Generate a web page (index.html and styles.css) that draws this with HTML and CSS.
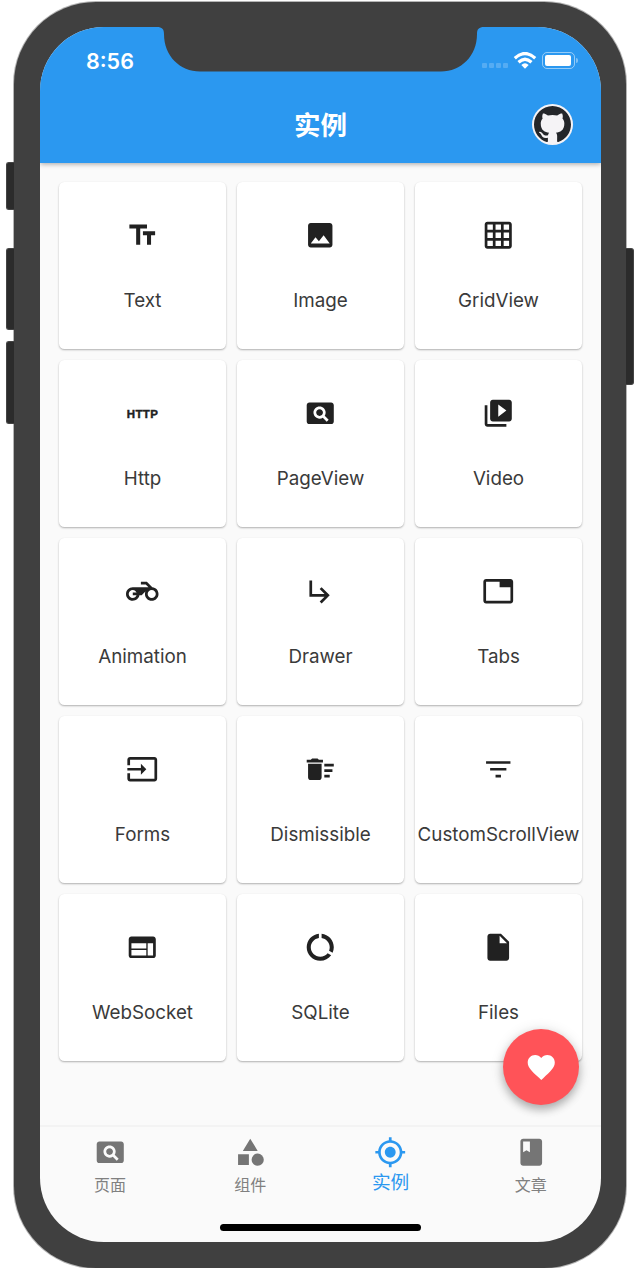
FILE: index.html
```html
<!DOCTYPE html>
<html lang="zh-CN">
<head>
<meta charset="utf-8">
<title>实例</title>
<link rel="stylesheet" href="styles.css">
</head>
<body>
<div class="phone">
  <span class="side-button mute"></span>
  <span class="side-button volume-up"></span>
  <span class="side-button volume-down"></span>
  <span class="side-button power"></span>
  <div class="screen">
    <svg class="notch" viewBox="0 0 328 45"><path d="M0 0C5 0 7 2 7 7C7 29 23 44.500 43 44.500H284C304 44.500 320 29 320 7C320 2 322 0 327 0Z"/></svg>
    <header class="app-bar">
      <div class="status">
        <span class="time">8:56</span>
        <div class="indicators">
          <span class="signal"><i></i><i></i><i></i><i></i></span>
          <svg class="wifi" viewBox="0 0 24 18"><path d="M1.800 6.200Q12-3.200 22.200 6.200M5.500 10.200Q12 4.200 18.500 10.200" fill="none" stroke="#fff" stroke-width="3.200"/><path d="M8.300 13Q12 9.700 15.700 13L12 16.800Z"/></svg>
          <span class="battery"><i></i></span>
          <span class="battery-tip"></span>
        </div>
      </div>
      <div class="title-row">
        <h1>实例</h1>
        <div class="avatar"><svg viewBox="0 0 16 16"><path d="M8 0C3.580 0 0 3.580 0 8c0 3.540 2.290 6.530 5.470 7.590.4.070.55-.17.55-.38 0-.19-.01-.82-.01-1.490-2.010.37-2.530-.49-2.690-.94-.09-.23-.48-.94-.82-1.130-.28-.15-.68-.52-.01-.53.63-.01 1.080.58 1.230.82.72 1.210 1.870.87 2.330.66.07-.52.28-.87.51-1.070-1.780-.2-3.640-.89-3.640-3.950 0-.87.31-1.590.82-2.150-.08-.2-.36-1.020.08-2.120 0 0 .67-.21 2.200.82.64-.18 1.320-.27 2-.27s1.360.09 2 .27c1.530-1.040 2.200-.82 2.200-.82.44 1.100.16 1.920.08 2.120.51.56.82 1.270.82 2.150 0 3.070-1.870 3.750-3.650 3.950.29.25.54.73.54 1.480 0 1.070-.01 1.930-.01 2.200 0 .21.15.46.55.38A8.013 8.013 0 0 0 16 8c0-4.420-3.580-8-8-8z"/></svg></div>
      </div>
    </header>
    <main class="grid">
      <div class="card"><svg class="icon" viewBox="0 0 24 24"><path d="M2.500 5.500h13M9 5.500V19M12.500 10.500h9M17 10.500V19" fill="none" stroke="currentColor" stroke-width="3"/></svg><span>Text</span></div>
      <div class="card"><svg class="icon" viewBox="0 0 24 24"><path d="M21 19V5c0-1.100-.9-2-2-2H5c-1.100 0-2 .9-2 2v14c0 1.100.9 2 2 2h14c1.100 0 2-.9 2-2zM8.500 13.500l2.500 3.010L14.500 12l4.500 6H5l3.500-4.500z"/></svg><span>Image</span></div>
      <div class="card"><svg class="icon" viewBox="0 0 24 24"><path d="M20 2H4c-1.100 0-2 .9-2 2v16c0 1.100.9 2 2 2h16c1.100 0 2-.9 2-2V4c0-1.100-.9-2-2-2zM8 20H4v-4h4v4zm0-6H4v-4h4v4zm0-6H4V4h4v4zm6 12h-4v-4h4v4zm0-6h-4v-4h4v4zm0-6h-4V4h4v4zm6 12h-4v-4h4v4zm0-6h-4v-4h4v4zm0-6h-4V4h4v4z"/></svg><span>GridView</span></div>
      <div class="card"><b class="icon http">HTTP</b><span>Http</span></div>
      <div class="card"><svg class="icon" viewBox="0 0 24 24"><path d="M11.500 9C10.120 9 9 10.120 9 11.500s1.120 2.500 2.500 2.500 2.500-1.120 2.500-2.500S12.880 9 11.500 9zM20 4H4c-1.100 0-2 .9-2 2v12c0 1.100.9 2 2 2h16c1.100 0 2-.9 2-2V6c0-1.100-.9-2-2-2zm-3.210 14.210l-2.910-2.910c-.69.44-1.510.7-2.390.7C9.010 16 7 13.990 7 11.500S9.010 7 11.500 7 16 9.010 16 11.500c0 .88-.26 1.690-.7 2.390l2.910 2.900-1.420 1.420z"/></svg><span>PageView</span></div>
      <div class="card"><svg class="icon" viewBox="0 0 24 24"><path d="M4 6H2v14c0 1.100.9 2 2 2h14v-2H4V6zm16-4H8c-1.100 0-2 .9-2 2v12c0 1.100.9 2 2 2h12c1.100 0 2-.9 2-2V4c0-1.100-.9-2-2-2zm-8 12.500v-9l6 4.500-6 4.500z"/></svg><span>Video</span></div>
      <div class="card"><svg class="icon" viewBox="0 0 24 24"><path d="M19.440 9.030L15.410 5H11v2h3.590l2 2H5c-2.800 0-5 2.200-5 5s2.200 5 5 5c2.460 0 4.450-1.690 4.900-4h1.650l2.770-2.770c-.21.54-.32 1.140-.32 1.770 0 2.800 2.200 5 5 5s5-2.200 5-5c0-2.650-1.970-4.770-4.560-4.970zM7.820 15C7.400 16.150 6.280 17 5 17c-1.630 0-3-1.370-3-3s1.370-3 3-3c1.280 0 2.400.85 2.820 2H5v2h2.820zM19 17c-1.660 0-3-1.340-3-3s1.340-3 3-3 3 1.340 3 3-1.340 3-3 3z"/></svg><span>Animation</span></div>
      <div class="card"><svg class="icon" viewBox="0 0 24 24"><path d="M19 15l-6 6-1.420-1.420L15.170 16H4V4h2v10h9.170l-3.590-3.580L13 9l6 6z"/></svg><span>Drawer</span></div>
      <div class="card"><svg class="icon" viewBox="0 0 24 24"><path d="M21 3H3c-1.100 0-2 .9-2 2v14c0 1.100.9 2 2 2h18c1.100 0 2-.9 2-2V5c0-1.100-.9-2-2-2zm0 16H3V5h10v4h8v10z"/></svg><span>Tabs</span></div>
      <div class="card"><svg class="icon" viewBox="0 0 24 24"><path d="M21 3.010H3c-1.100 0-2 .9-2 2V9h2V4.990h18v14.030H3V15H1v4.010c0 1.100.9 1.980 2 1.980h18c1.100 0 2-.88 2-1.980v-14c0-1.110-.9-2-2-2zM11 16l4-4-4-4v3H1v2h10v3z"/></svg><span>Forms</span></div>
      <div class="card"><svg class="icon" viewBox="0 0 24 24"><path d="M15 16h4v2h-4zm0-8h7v2h-7zm0 4h6v2h-6zM3 18c0 1.100.9 2 2 2h6c1.100 0 2-.9 2-2V8H3v10zM14 5h-3l-1-1H6L5 5H2v2h12z"/></svg><span>Dismissible</span></div>
      <div class="card"><svg class="icon" viewBox="0 0 24 24"><path d="M10 18h4v-2h-4v2zM3 6v2h18V6H3zm3 7h12v-2H6v2z"/></svg><span>CustomScrollView</span></div>
      <div class="card"><svg class="icon" viewBox="0 0 24 24"><path d="M20 4H4c-1.100 0-1.990.9-1.990 2L2 18c0 1.100.9 2 2 2h16c1.100 0 2-.9 2-2V6c0-1.100-.9-2-2-2zm-5 14H4v-4h11v4zm0-5H4V9h11v4zm5 5h-4V9h4v9z"/></svg><span>WebSocket</span></div>
      <div class="card"><svg class="icon" viewBox="0 0 24 24"><path d="M13 2.050v3.030c3.390.49 6 3.390 6 6.920 0 .9-.18 1.750-.48 2.540l2.600 1.530c.56-1.240.88-2.620.88-4.070 0-5.180-3.950-9.450-9-9.950zM12 19c-3.870 0-7-3.130-7-7 0-3.530 2.610-6.430 6-6.920V2.050c-5.060.5-9 4.760-9 9.950 0 5.520 4.470 10 9.990 10 3.310 0 6.240-1.610 8.060-4.090l-2.600-1.530C16.170 17.980 14.210 19 12 19z"/></svg><span>SQLite</span></div>
      <div class="card"><svg class="icon" viewBox="0 0 24 24"><path d="M6 2c-1.100 0-1.990.9-1.990 2L4 20c0 1.100.89 2 1.990 2H18c1.100 0 2-.9 2-2V8l-6-6H6zm7 7V3.500L18.500 9H13z"/></svg><span>Files</span></div>
    </main>
    <div class="fab"><svg class="icon" viewBox="0 0 24 24"><path d="M12 21.350l-1.450-1.320C5.400 15.360 2 12.280 2 8.500 2 5.420 4.420 3 7.500 3c1.740 0 3.410.81 4.500 2.090C13.090 3.810 14.760 3 16.500 3 19.580 3 22 5.420 22 8.500c0 3.780-3.400 6.860-8.550 11.540L12 21.350z"/></svg></div>
    <nav class="tab-bar">
      <div class="tab"><svg class="icon" viewBox="0 0 24 24"><path d="M11.500 9C10.120 9 9 10.120 9 11.500s1.120 2.500 2.500 2.500 2.500-1.120 2.500-2.500S12.880 9 11.500 9zM20 4H4c-1.100 0-2 .9-2 2v12c0 1.100.9 2 2 2h16c1.100 0 2-.9 2-2V6c0-1.100-.9-2-2-2zm-3.210 14.210l-2.910-2.910c-.69.44-1.510.7-2.390.7C9.010 16 7 13.990 7 11.500S9.010 7 11.500 7 16 9.010 16 11.500c0 .88-.26 1.690-.7 2.390l2.910 2.900-1.420 1.420z"/></svg><span>页面</span></div>
      <div class="tab"><svg class="icon" viewBox="0 0 24 24"><path d="M12 2l-5.500 9h11zM3 13.500h8v8H3z"/><circle cx="17.500" cy="17.500" r="4.500"/></svg><span>组件</span></div>
      <div class="tab active"><svg class="icon" viewBox="0 0 24 24"><path d="M12 8c-2.210 0-4 1.790-4 4s1.790 4 4 4 4-1.790 4-4-1.790-4-4-4zm8.940 3c-.46-4.170-3.770-7.480-7.940-7.940V1h-2v2.060C6.830 3.520 3.520 6.830 3.060 11H1v2h2.060c.46 4.170 3.770 7.480 7.940 7.940V23h2v-2.060c4.170-.46 7.480-3.770 7.940-7.940H23v-2h-2.060zM12 19c-3.870 0-7-3.130-7-7s3.130-7 7-7 7 3.130 7 7-3.130 7-7 7z"/></svg><span>实例</span></div>
      <div class="tab"><svg class="icon" viewBox="0 0 24 24"><path d="M18 2H6c-1.100 0-2 .9-2 2v16c0 1.100.9 2 2 2h12c1.100 0 2-.9 2-2V4c0-1.100-.9-2-2-2zM6 4h5v8l-2.500-1.500L6 12V4z"/></svg><span>文章</span></div>
    </nav>
    <div class="home-indicator"></div>
  </div>
</div>
</body>
</html>
```
FILE: styles.css
```css
* { box-sizing: border-box; }

body {
  margin: 0;
  background: #fff;
  font-family: Inter, "Noto Sans CJK SC", sans-serif;
}

.phone {
  position: relative;
  width: 612px;
  height: 1266px;
  margin: 2px 0 0 14px;
  padding: 25px 25px 26px 26px;
  background: #404040;
  border-radius: 82px;
  box-shadow: 0 0 0 1px #b5b5b5;
}

.side-button {
  position: absolute;
  left: -8px;
  width: 8px;
  background: #2b2b2b;
  border: 1px solid #444;
  border-right: 0;
  border-radius: 3px 0 0 3px;
}

.mute { top: 160px; height: 48px; }
.volume-up { top: 246px; height: 82px; }
.volume-down { top: 339px; height: 83px; }

.power {
  top: 246px;
  left: 612px;
  height: 137px;
  border: 1px solid #444;
  border-left: 0;
  border-radius: 0 3px 3px 0;
}

.screen {
  position: relative;
  display: flex;
  flex-direction: column;
  width: 561px;
  height: 1215px;
  overflow: hidden;
  background: #fafafa;
  border-radius: 64px;
}

.notch {
  position: absolute;
  top: -0.5px;
  left: 117px;
  width: 328px;
  height: 45px;
  fill: #404040;
}

.app-bar {
  flex: none;
  height: 135.500px;
  color: #fff;
  background: #2b98f0;
  box-shadow: 0 1px 5px rgba(0, 0, 0, .35);
}

.status {
  display: flex;
  justify-content: space-between;
  align-items: center;
  height: 60px;
  padding: 7px 23px 0 46px;
}

.time {
  font-size: 21.500px;
  font-weight: 600;
  line-height: 26px;
}

.indicators {
  display: flex;
  align-items: center;
}

.signal {
  display: flex;
  gap: 2px;
  margin: 9px 5px 0 0;
}

.signal i {
  width: 5px;
  height: 5px;
  background: rgba(255, 255, 255, .2);
  border-radius: 1px;
}

.wifi {
  width: 24px;
  height: 18px;
  fill: #fff;
}

.battery {
  width: 33px;
  height: 17px;
  margin-left: 5px;
  padding: 2px;
  border: 1px solid rgba(255, 255, 255, .5);
  border-radius: 5px;
}

.battery i {
  display: block;
  width: 26px;
  height: 11px;
  background: #fff;
  border-radius: 2px;
}

.battery-tip {
  width: 2px;
  height: 5px;
  margin-left: 1px;
  background: rgba(255, 255, 255, .4);
  border-radius: 0 2px 2px 0;
}

.title-row {
  display: grid;
  grid-template-columns: 1fr auto 1fr;
  align-items: center;
  height: 75px;
  padding-right: 28.500px;
  padding-left: 28.500px;
}

.title-row h1 {
  grid-column: 2;
  margin: 0;
  padding-top: 1px;
  font-size: 26.500px;
  font-weight: 600;
  line-height: 39px;
}

.avatar {
  justify-self: end;
  width: 41px;
  height: 41px;
  padding: 2px;
  background: #f5f3f6;
  border-radius: 50%;
}

.avatar svg {
  display: block;
  fill: #24262a;
}

.grid {
  display: grid;
  flex: 1;
  grid-template-columns: repeat(3, 167px);
  grid-auto-rows: 167.300px;
  gap: 10.800px 11px;
  align-content: start;
  padding: 19px 19px 0;
}

.card {
  display: flex;
  flex-direction: column;
  align-items: center;
  gap: 36.400px;
  padding-top: 37.300px;
  color: #3a3a3a;
  background: #fff;
  border-radius: 5.500px;
  box-shadow: 0 1px 2px rgba(0, 0, 0, .3);
  font-size: 18.800px;
  line-height: 26px;
  white-space: nowrap;
}

.icon {
  display: block;
  flex: none;
  width: 32.500px;
  height: 32.500px;
  fill: currentColor;
}

.card .icon { color: #212121; }

.http {
  display: flex;
  justify-content: center;
  align-items: center;
  padding-top: 1px;
  font-family: "Liberation Sans", Arial, sans-serif;
  font-size: 11.500px;
  font-weight: 700;
  letter-spacing: .4px;
  -webkit-text-stroke: .4px currentColor;
}

.fab {
  position: absolute;
  top: 1002px;
  left: 463px;
  display: flex;
  justify-content: center;
  align-items: center;
  width: 76px;
  height: 76px;
  color: #fff;
  background: #ff5358;
  border-radius: 50%;
  box-shadow: 0 5px 9px rgba(0, 0, 0, .25), 0 1px 14px rgba(0, 0, 0, .12);
}

.tab-bar {
  display: grid;
  grid-template-columns: repeat(4, 1fr);
  flex: none;
  height: 99.500px;
  padding-top: 9.500px;
  border-top: 2px solid #f3f3f3;
}

.tab {
  display: flex;
  flex-direction: column;
  align-items: center;
  gap: 4px;
  color: #808080;
  font-size: 16px;
  line-height: 24px;
}

.tab .icon { color: #757575; }

.tab.active,
.active .icon {
  color: #2b98f0;
}

.tab.active {
  gap: 1px;
  font-size: 18.700px;
  line-height: 26px;
}

.home-indicator {
  flex: none;
  width: 201px;
  height: 7px;
  margin: 0 auto 11px;
  background: #000;
  border-radius: 4px;
}
```
